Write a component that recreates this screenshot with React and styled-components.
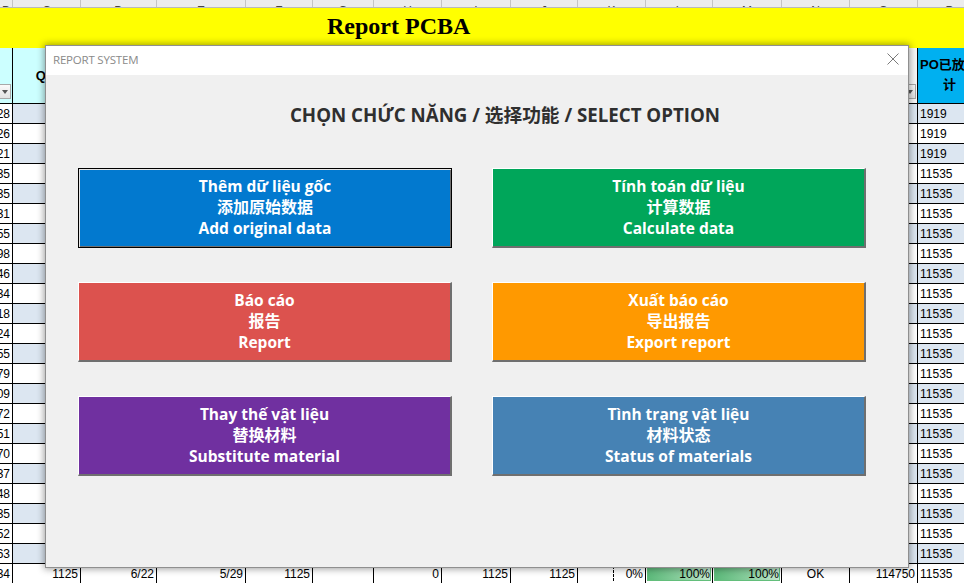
import React from 'react';
import styled, { createGlobalStyle, css } from 'styled-components';

const GlobalStyle = createGlobalStyle`
  html, body {
    margin: 0;
    padding: 0;
    width: 964px;
    height: 583px;
    overflow: hidden;
    background: #ffffff;
  }
  body {
    font-family: "Liberation Sans", Arial, sans-serif;
  }
  * { box-sizing: border-box; }
`;

/* column widths of the worksheet, in pixels */
const COLS = [13, 68, 76, 89, 67, 61, 68, 69, 67, 68, 67, 69, 68, 68, 64];
const TEMPLATE = COLS.map((w) => `${w}px`).join(' ');
const LETTERS = ['B', 'C', 'D', 'E', 'F', 'G', 'H', 'I', 'J', 'K', 'L', 'M', 'N', 'O', 'P'];

const Page = styled.div`
  position: relative;
  width: 964px;
  height: 583px;
  overflow: hidden;
`;

const Sheet = styled.div`
  display: flex;
  flex-direction: column;
  width: max-content;
`;

const LetterRow = styled.div`
  display: grid;
  grid-template-columns: ${TEMPLATE};
  height: 8px;
  background: #ececec;
  border-bottom: 1px solid #b9b9b9;
`;

const LetterCell = styled.div`
  display: flex;
  align-items: flex-end;
  justify-content: center;
  overflow: hidden;
  border-right: 1px solid #c4c4c4;
  font-size: 12px;
  line-height: 12px;
  color: #444;
  & > span { margin-bottom: -10px; }
`;

const TitleBand = styled.div`
  height: 40px;
  background: #ffff00;
  display: flex;
  align-items: center;
  padding: 0 0 4px 327px;
  font-family: "Liberation Serif", "Times New Roman", serif;
  font-weight: bold;
  font-size: 24px;
  color: #000;
`;

const Row = styled.div`
  display: grid;
  grid-template-columns: ${TEMPLATE};
  height: ${(p) => p.$h || 20}px;
  border-bottom: 1px solid #000;
`;

const Cell = styled.div`
  position: relative;
  display: flex;
  align-items: center;
  justify-content: ${(p) => (p.$align === 'left' ? 'flex-start' : p.$align === 'center' ? 'center' : 'flex-end')};
  padding: 0 2px;
  overflow: hidden;
  white-space: nowrap;
  border-right: 1px solid #000;
  font-size: 12px;
  color: #000;
  background: ${(p) => p.$bg || '#ffffff'};
`;

const HeadCell = styled(Cell)`
  justify-content: center;
  text-align: center;
  font-weight: bold;
  font-size: 13px;
  line-height: 20px;
  padding-bottom: ${(p) => p.$pb || 0}px;
  font-family: "Liberation Sans", "Noto Sans CJK SC", sans-serif;
`;

/* wrapped header caption: an over-long first line runs off to the right */
const Caption = styled.span`
  display: block;
  width: 100%;
  min-width: 0;
  text-align: center;
`;

const FilterButton = styled.span`
  position: absolute;
  right: 1px;
  bottom: 4px;
  width: 12px;
  height: 15px;
  border: 1px solid #a8a8a8;
  background: linear-gradient(#fafafa, #e2e2e2);
  display: flex;
  align-items: center;
  justify-content: center;
  &::after {
    content: '';
    border-left: 3.5px solid transparent;
    border-right: 3.5px solid transparent;
    border-top: 4px solid #555;
    margin-top: 1px;
  }
`;

const Split = styled.span`
  align-self: stretch;
  width: 36px;
  margin: 2px 0 2px -2px;
  border-right: 1px dashed #000;
`;

const Spacer = styled.span`
  flex: 1;
`;

const DataBar = styled.div`
  position: absolute;
  left: 1px;
  right: 1px;
  top: 2px;
  bottom: 2px;
  border: 1px solid #63be7b;
  background: linear-gradient(90deg, #5cb97a 0%, #8fd0a2 60%, #c4e7cf 100%);
`;

const BarValue = styled.span`
  position: relative;
`;

/* ---------- dialog ---------- */

const Dialog = styled.section`
  position: absolute;
  left: 45px;
  top: 45px;
  width: 864px;
  height: 523px;
  display: flex;
  flex-direction: column;
  background: #f0f0f0;
  border: 1px solid #8f8f8f;
  box-shadow: 0 0 7px 1px rgba(0, 0, 0, 0.38);
  font-family: "Open Sans", "Noto Sans", "Noto Sans CJK SC", sans-serif;
`;

const TitleBar = styled.header`
  height: 29px;
  flex: none;
  background: #ffffff;
  display: flex;
  align-items: center;
  justify-content: space-between;
  padding: 0 9px 3px 7px;
`;

const TitleText = styled.span`
  font-size: 11.5px;
  color: #8a8a8a;
  letter-spacing: -0.2px;
`;

const CloseIcon = styled.svg`
  width: 12px;
  height: 12px;
  display: block;
`;

const Body = styled.div`
  flex: 1;
  display: flex;
  flex-direction: column;
  padding: 27px 0 0 32px;
`;

const Heading = styled.h1`
  margin: 0;
  padding-left: 67px;
  width: 787px;
  text-align: center;
  font-size: 18.7px;
  line-height: 26px;
  font-weight: 700;
  color: #2f2f2f;
`;

const ButtonGrid = styled.div`
  display: grid;
  grid-template-columns: 374px 374px;
  grid-auto-rows: 80px;
  column-gap: 40px;
  row-gap: 34px;
  margin-top: 40px;
`;

const ActionButton = styled.button`
  display: flex;
  flex-direction: column;
  align-items: center;
  justify-content: center;
  padding: 0 0 1px;
  margin: 0;
  background: ${(p) => p.$color};
  border-style: solid;
  border-width: 1px 2px 2px 1px;
  border-color: #ffffff #6f6f6f #6f6f6f #ffffff;
  font-family: "Open Sans", "Noto Sans", "Noto Sans CJK SC", sans-serif;
  font-weight: 700;
  font-size: 15.5px;
  line-height: 21px;
  color: #ffffff;
  cursor: pointer;
  ${(p) =>
    p.$focused &&
    css`
      border: 1px solid #000;
      box-shadow: inset 1px 1px 0 #e6e6e6, inset -1px -1px 0 #6f6f6f;
    `}
`;

const Line = styled.span`
  display: block;
  white-space: nowrap;
  font-size: ${(p) => (p.$cjk ? '16px' : 'inherit')};
`;

const LEFT_VALUES = ['28', '26', '21', '35', '35', '31', '55', '98', '46', '34', '18', '24', '55', '79', '09', '72', '51', '70', '37', '48', '35', '52', '63'];

const ACTIONS = [
  { vi: 'Thêm dữ liệu gốc', zh: '添加原始数据', en: 'Add original data', color: '#0279cf', focused: true },
  { vi: 'Tính toán dữ liệu', zh: '计算数据', en: 'Calculate data', color: '#00a65a' },
  { vi: 'Báo cáo', zh: '报告', en: 'Report', color: '#dc524e' },
  { vi: 'Xuất báo cáo', zh: '导出报告', en: 'Export report', color: '#ff9900' },
  { vi: 'Thay thế vật liệu', zh: '替换材料', en: 'Substitute material', color: '#7030a0' },
  { vi: 'Tình trạng vật liệu', zh: '材料状态', en: 'Status of materials', color: '#4682b4' },
];

const BAND = '#dce6f1';

function DataRow({ index }) {
  const bg = index % 2 === 0 ? BAND : '#ffffff';
  const right = index < 3 ? '1919' : '11535';
  return (
    <Row>
      {COLS.map((_, c) => {
        if (c === 0) return <Cell key={c}>{LEFT_VALUES[index]}</Cell>;
        if (c === COLS.length - 1)
          return (
            <Cell key={c} $bg={bg} $align="left">
              {right}
            </Cell>
          );
        return <Cell key={c} $bg={bg} />;
      })}
    </Row>
  );
}

function TotalRow() {
  return (
    <Row>
      <Cell>34</Cell>
      <Cell>1125</Cell>
      <Cell>6/22</Cell>
      <Cell>5/29</Cell>
      <Cell>1125</Cell>
      <Cell />
      <Cell>0</Cell>
      <Cell>1125</Cell>
      <Cell>1125</Cell>
      <Cell>
        <Split />
        <Spacer />
        0%
      </Cell>
      <Cell>
        <DataBar />
        <BarValue>100%</BarValue>
      </Cell>
      <Cell>
        <DataBar />
        <BarValue>100%</BarValue>
      </Cell>
      <Cell $align="center">OK</Cell>
      <Cell>114750</Cell>
      <Cell $align="left">11535</Cell>
    </Row>
  );
}

export default function App() {
  return (
    <Page>
      <GlobalStyle />
      <Sheet>
        <LetterRow>
          {COLS.map((_, i) => (
            <LetterCell key={i}>
              <span>{LETTERS[i]}</span>
            </LetterCell>
          ))}
        </LetterRow>
        <TitleBand>Report PCBA</TitleBand>
        <Row $h={56}>
          <HeadCell $bg="#ccffff">
            <FilterButton />
          </HeadCell>
          <HeadCell $bg="#ccffff">Qty</HeadCell>
          {COLS.slice(2, COLS.length - 2).map((_, i) => (
            <HeadCell key={i} $bg="#ccffff" />
          ))}
          <HeadCell $bg="#f7f7f7">
            <FilterButton />
          </HeadCell>
          <HeadCell $bg="#00b0f0" $pb={2}>
            <Caption>
              PO已放料累
              <br />
              计
            </Caption>
          </HeadCell>
        </Row>
        {LEFT_VALUES.map((_, i) => (
          <DataRow key={i} index={i} />
        ))}
        <TotalRow />
      </Sheet>

      <Dialog>
        <TitleBar>
          <TitleText>REPORT SYSTEM</TitleText>
          <CloseIcon viewBox="0 0 12 12">
            <path d="M0.5 0.5 L11.5 11.5 M11.5 0.5 L0.5 11.5" stroke="#7a7a7a" strokeWidth="1" fill="none" />
          </CloseIcon>
        </TitleBar>
        <Body>
          <Heading>CHỌN CHỨC NĂNG / 选择功能 / SELECT OPTION</Heading>
          <ButtonGrid>
            {ACTIONS.map((a) => (
              <ActionButton key={a.en} $color={a.color} $focused={a.focused}>
                <Line>{a.vi}</Line>
                <Line $cjk>{a.zh}</Line>
                <Line>{a.en}</Line>
              </ActionButton>
            ))}
          </ButtonGrid>
        </Body>
      </Dialog>
    </Page>
  );
}
